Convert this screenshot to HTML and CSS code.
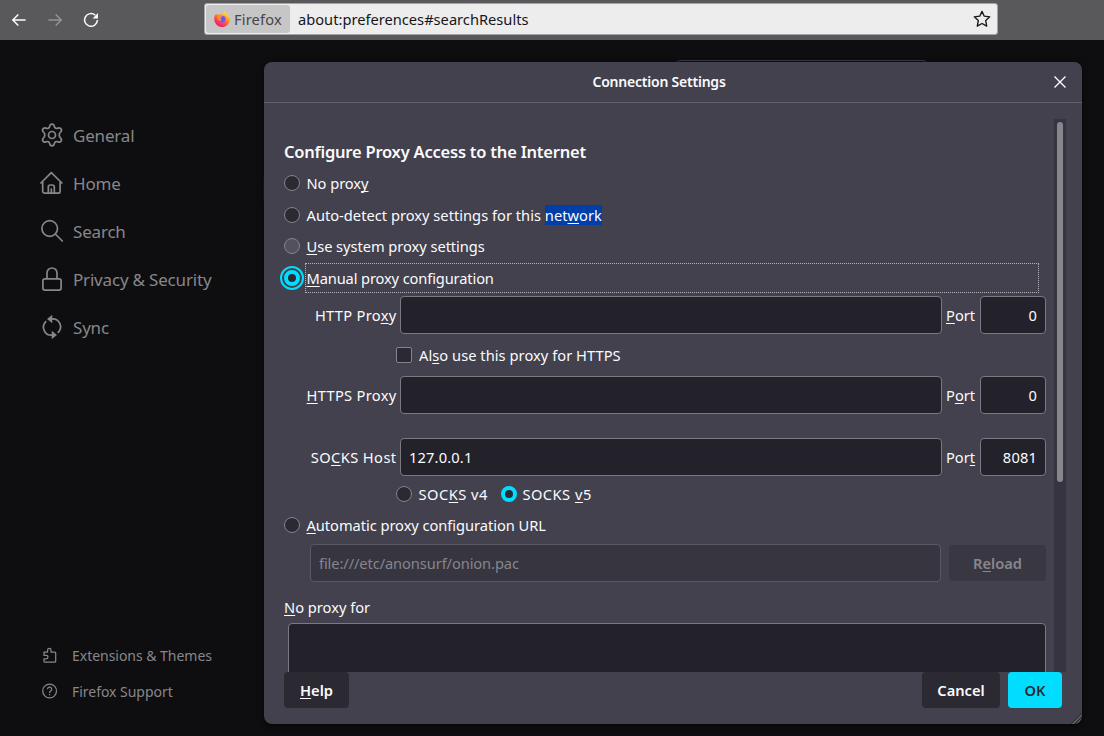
FILE: index.html
```html
<!DOCTYPE html>
<html lang="en">
<head>
<meta charset="utf-8">
<title>Settings</title>
<link rel="stylesheet" href="styles.css">
</head>
<body>
<header class="toolbar">
  <nav class="nav-buttons">
    <svg class="nav-icon" viewBox="0 0 16 16"><path d="M14.6 8H2M7.3 2.5 1.8 8l5.500 5.500"/></svg>
    <svg class="nav-icon nav-disabled" viewBox="0 0 16 16"><path d="M1.400 8H14M8.700 2.500 14.200 8l-5.500 5.500"/></svg>
    <svg class="nav-icon" viewBox="0 0 16 16"><path d="M12.300 3.200A6.400 6.400 0 1 0 14.400 8"/><path class="solid" d="M15 1v5.500H9.500z"/></svg>
  </nav>
  <div class="urlbar">
    <div class="identity">
      <svg class="firefox-logo" viewBox="0 0 16 16">
        <defs>
          <linearGradient id="flame" x1=".85" y1=".05" x2=".25" y2=".95"><stop offset="0" stop-color="#fff44f"/><stop offset=".35" stop-color="#ffa52a"/><stop offset=".65" stop-color="#ff4f3f"/><stop offset="1" stop-color="#f5156c"/></linearGradient>
          <radialGradient id="globe"><stop offset="0" stop-color="#5b4de0"/><stop offset="1" stop-color="#9059ff"/></radialGradient>
        </defs>
        <path fill="url(#flame)" d="M10.200 0c1 1.200 1.500 2 2 3 .5-.2.900-.1 1.200.1C15 4.500 16 6.500 16 8.500A7.800 7.500 0 0 1 .2 8.500C.2 6 .8 4 2.200 2.800l.5 1.100c.8-.5 1.600-.7 2.600-.5C6.500 3.500 9.600 3 10.200 0z"/>
        <circle cx="8.300" cy="8.300" r="3.500" fill="url(#globe)"/>
        <path fill="#ff8f20" d="M3.500 4.500c1-.5 2-.3 2.900.5l2 .4c-.2.900-1.300 1.200-2 1.500-.2 1 .5 1.600 1.700 1.300-.5 1.300-2 1.900-3.200 1.400C3 8.500 2.700 6 3.500 4.500z"/>
      </svg>
      <span class="identity-name">Firefox</span>
    </div>
    <span class="url">about:preferences#searchResults</span>
    <svg class="star" viewBox="0 0 16 16"><path d="m8 1.200 2 4.300 4.900.6-3.600 3.300.9 4.900L8 12l-4.200 2.300.9-4.900L1.100 6.100 6 5.500z"/></svg>
  </div>
</header>

<div class="page">
  <aside class="sidebar">
    <ul class="categories">
      <li><svg viewBox="0 0 24 24"><circle cx="12" cy="12" r="3.500"/><path d="M9.700 3.400Q10 1.200 12 1.200t2.300 2.200q.2 1.500 1.700 2 .6.300 2.100-.3 2-.7 3 .9 1 1.800-.6 3.100-1.300.9-1.300 2.900t1.300 2.900q1.600 1.300.6 3.100-1 1.600-3 .9-1.500-.6-2.100-.3-1.500.5-1.700 2-.3 2.200-2.300 2.200t-2.300-2.200q-.2-1.500-1.700-2-.6-.3-2.100.3-2 .7-3-.9-1-1.800.6-3.100 1.300-.9 1.300-2.900T3.500 9.100Q1.900 7.800 2.900 6q1-1.600 3-.9 1.500.6 2.100.3 1.500-.5 1.700-2z"/></svg>General</li>
      <li><svg viewBox="0 0 24 24"><path d="M.9 12 11.300 1.700 21.900 12M2.700 10.500v9.700a2 2 0 0 0 2 2h13.400a2 2 0 0 0 2-2v-9.700M8.300 22v-6a2 2 0 0 1 2-2h2a2 2 0 0 1 2 2v6M11.300 22v-4"/></svg>Home</li>
      <li><svg viewBox="0 0 24 24"><circle cx="9.700" cy="9.500" r="7.800"/><path d="m15.300 15 7 7"/></svg>Search</li>
      <li><svg viewBox="0 0 24 24"><rect x="2.900" y="11.800" width="18.200" height="11.300" rx="2"/><path d="M7 11.500V6a5 5 0 0 1 10 0v5.500"/></svg>Privacy &amp; Security</li>
      <li><svg viewBox="0 0 24 24"><path d="M11.500 3.800H12a8 8 0 0 1 6.200 13.600M12.500 20.200H12A8 8 0 0 1 5.800 6.600"/><path class="solid" d="M12.300-.2v8.400L7 4zM11.700 15.800v8.400l5.300-4.200z"/></svg>Sync</li>
    </ul>
    <ul class="links">
      <li><svg viewBox="0 0 16 16"><path d="M2 5h3.600V3a1.700 1.700 0 0 1 3.400 0v2h3.700a1 1 0 0 1 1 1v8.200a1 1 0 0 1-1 1H3a1 1 0 0 1-1-1v-2.400h2.300a1.700 1.700 0 0 0 0-3.400H2z"/></svg>Extensions &amp; Themes</li>
      <li><svg viewBox="0 0 16 16"><circle cx="7.600" cy="8" r="6.900"/><path d="M5.500 6.300A2.100 2.100 0 1 1 8.700 8c-.7.500-1.100.8-1.100 1.600v.3M7.600 11v1.200"/></svg>Firefox Support</li>
    </ul>
  </aside>
  <div class="search-field"></div>
  <div class="result-edge"></div>

  <section class="dialog">
    <header class="dialog-title">
      <h1>Connection Settings</h1>
      <svg class="close" viewBox="0 0 12 12"><path d="m.5.5 11 11M11.500.5l-11 11"/></svg>
    </header>
    <div class="dialog-body">
      <div class="content">
        <h2>Configure Proxy Access to the Internet</h2>
        <label class="choice"><i class="radio"></i><span>No prox<u>y</u></span></label>
        <label class="choice"><i class="radio"></i><span class="wide">Auto-detect proxy settings for this <mark>net<u>w</u>ork</mark></span></label>
        <label class="choice system"><i class="radio hover"></i><span><u>U</u>se system proxy settings</span></label>
        <label class="choice manual"><i class="radio checked focus"></i><span class="focus-box"><u>M</u>anual proxy configuration</span></label>

        <div class="host-row"><span class="field-label">HTTP Pro<u>x</u>y</span><div class="field"></div><span class="port-label"><u>P</u>ort</span><div class="field port">0</div></div>
        <label class="also"><i class="checkbox"></i><span>Al<u>s</u>o use this proxy for HTTPS</span></label>
        <div class="host-row"><span class="field-label"><u>H</u>TTPS Proxy</span><div class="field"></div><span class="port-label">P<u>o</u>rt</span><div class="field port">0</div></div>
        <div class="host-row socks"><span class="field-label">SO<u>C</u>KS Host</span><div class="field">127.0.0.1</div><span class="port-label">Por<u>t</u></span><div class="field port">8081</div></div>
        <div class="versions">
          <label><i class="radio"></i><span>SOC<u>K</u>S v4</span></label>
          <label><i class="radio checked"></i><span>SOCKS <u>v</u>5</span></label>
        </div>
        <label class="choice auto"><i class="radio"></i><span><u>A</u>utomatic proxy configuration URL</span></label>
        <div class="pac-row"><div class="field disabled">file:///etc/anonsurf/onion.pac</div><button class="btn reload" disabled>R<u>e</u>load</button></div>
        <div class="exceptions-label"><u>N</u>o proxy for</div>
        <div class="exceptions"></div>
      </div>
      <div class="scrollbar"><div class="thumb"></div></div>
    </div>
    <footer class="actions">
      <button class="btn help"><u>H</u>elp</button>
      <button class="btn cancel">Cancel</button>
      <button class="btn primary">OK</button>
    </footer>
    <svg class="grip" viewBox="0 0 11 11"><path class="dark" d="M0 11 11 0M4 11l7-7M8 11l3-3"/><path d="M1.500 11 11 1.500M5.500 11 11 5.500M9 11l2-2"/></svg>
  </section>
</div>
</body>
</html>
```

FILE: styles.css
```css
* { box-sizing: border-box; }
body {
  margin: 0;
  height: 736px;
  overflow: hidden;
  background: #0e0e10;
  color: #fbfbfe;
  font: 14.67px/20px "Noto Sans", sans-serif;
}
svg { fill: none; stroke: currentColor; flex: none; }
.solid { fill: currentColor; stroke: none; }
u { text-decoration: underline 1px; text-underline-offset: 2px; text-decoration-skip-ink: none; }
ul { list-style: none; margin: 0; padding: 0; }

.toolbar {
  display: flex;
  align-items: center;
  height: 40px;
  background: #59595b;
}
.nav-buttons { display: flex; gap: 20px; width: 204px; padding-left: 11px; }
.nav-icon { width: 16px; height: 16px; stroke-width: 1.500; color: #fbfbfe; }
.nav-disabled { color: #949495; }
.urlbar {
  display: flex;
  align-items: center;
  width: 794px;
  height: 32px;
  margin-top: -2px;
  padding: 1px;
  border: 1px solid #a4a4a4;
  border-radius: 3px;
  background: #ededed;
  color: #16161a;
}
.identity {
  display: flex;
  align-items: center;
  gap: 4px;
  width: 84px;
  height: 28px;
  padding-left: 8px;
  border-radius: 3px;
  background: #c6c6c6;
  color: #45454a;
}
.identity-name { letter-spacing: .15px; }
.firefox-logo { width: 16px; height: 16px; stroke: none; }
.url { flex: 1; padding-left: 8px; }
.star { width: 18px; height: 18px; margin-right: 5px; stroke-width: 1.200; stroke-linejoin: round; }

.page { position: relative; display: flex; height: 696px; }
.sidebar {
  display: flex;
  flex-direction: column;
  justify-content: space-between;
  width: 264px;
  padding: 72px 0 26px 40px;
  color: #87878a;
}
.categories li {
  display: flex;
  align-items: center;
  gap: 9px;
  height: 48px;
  font-size: 17px;
  letter-spacing: -.19px;
}
.categories svg {
  width: 24px;
  height: 24px;
  margin-top: -2px;
  stroke-width: 1.700;
  stroke-linejoin: round;
  stroke-linecap: round;
}
.links li {
  display: flex;
  align-items: center;
  gap: 14px;
  height: 36px;
  padding-left: 2px;
  font-size: 14px;
  letter-spacing: -.03px;
}
.links svg { width: 16px; height: 16px; margin-top: -2px; stroke-width: 1.250; stroke-linejoin: round; }
.search-field {
  position: absolute;
  left: 676px;
  top: 20px;
  width: 251px;
  height: 32px;
  border: 1px solid #3d3d41;
  border-radius: 4px;
}
.result-edge { position: absolute; left: 263px; top: 137px; width: 2px; height: 24px; background: #071a43; }

.dialog {
  position: relative;
  display: flex;
  flex-direction: column;
  width: 818px;
  height: 662px;
  margin-top: 22px;
  border-radius: 8px;
  background: #42414d;
  box-shadow: 0 2px 6px rgba(0, 0, 0, .6);
  overflow: hidden;
}
.dialog-title {
  display: grid;
  grid-template-columns: 1fr auto 1fr;
  align-items: center;
  height: 41px;
  border-bottom: 1px solid #62616b;
}
.dialog-title h1 {
  grid-column: 2;
  margin: 0 28px 0 0;
  font-size: 14px;
  font-weight: 600;
  letter-spacing: -.22px;
}
.close { justify-self: end; width: 12px; height: 12px; margin-right: 16px; stroke-width: 1.400; }
.dialog-body {
  display: flex;
  height: 553px;
  margin: 16px 16px 0 0;
  padding-left: 20px;
  overflow: hidden;
}
.content { width: 762px; margin-right: 8px; padding-top: 21px; flex: none; }
.content h2 {
  height: 24px;
  margin: 0 0 3px;
  font-size: 16.500px;
  line-height: 24px;
  font-weight: 600;
  letter-spacing: -.22px;
}
.scrollbar { width: 12px; height: 553px; padding: 3px; background: #35343f; }
.thumb { width: 6px; height: 360px; border-radius: 3px; background: #87868d; }

.radio {
  flex: none;
  width: 16px;
  height: 16px;
  border: 1px solid #85848c;
  border-radius: 50%;
  background: #2b2a33;
}
.radio.hover { background: #52525e; }
.radio.checked { border: 4px solid #00ddff; }
.radio.focus { outline: 2px solid #00ddff; outline-offset: 2px; }
.choice { display: flex; align-items: center; gap: 6.500px; height: 32px; letter-spacing: -.05px; }
.choice .wide { letter-spacing: .01px; }
.choice.system { height: 30px; }
.choice.manual { gap: 5px; margin-top: 1px; letter-spacing: -.13px; }
.choice .focus-box {
  width: 734px;
  height: 30px;
  padding-left: .5px;
  border: 1px dotted #b5b4ba;
  line-height: 29px;
}
mark { display: inline-block; background: #003eaa; color: inherit; }
.host-row { display: flex; align-items: center; height: 38px; margin-top: 2px; }
.field-label { width: 112.500px; margin-right: 3.500px; text-align: right; white-space: nowrap; letter-spacing: .3px; }
.socks .field-label { letter-spacing: .4px; }
.field {
  flex: 1;
  height: 38px;
  padding: 0 8px;
  border: 1px solid #7b7a83;
  border-radius: 4px;
  background: #23222b;
  line-height: 36px;
}
.socks .field { letter-spacing: .15px; }
.port-label { width: 38px; padding-left: 4px; }
.field.port { flex: none; width: 66px; text-align: right; }
.also { display: flex; align-items: center; gap: 7px; height: 42px; padding-left: 112px; letter-spacing: .04px; }
.checkbox { width: 16px; height: 16px; border: 1px solid #85848c; border-radius: 2px; background: #2b2a33; }
.also + .host-row { margin-top: 0; }
.host-row.socks { margin-top: 24px; }
.versions { display: flex; gap: 13px; height: 36px; padding-left: 112px; letter-spacing: .48px; }
.versions label { display: flex; align-items: center; gap: 6.500px; }
.versions label + label { gap: 5.500px; }
.choice.auto { height: 26px; }
.pac-row { display: flex; align-items: center; gap: 8px; margin: 6px 0 0 26px; }
.field.disabled { border-color: #5a5963; background: #363540; color: #86858d; letter-spacing: -.1px; }
.btn {
  height: 36px;
  padding: 0;
  border: 0;
  border-radius: 4px;
  background: #2b2a33;
  color: #fbfbfe;
  font: 600 14.670px/36px "Noto Sans", sans-serif;
}
.reload { width: 97px; background: #393842; color: #87868e; }
.exceptions-label { height: 41px; line-height: 51px; }
.exceptions { height: 120px; margin-left: 4px; border: 1px solid #7b7a83; border-radius: 4px; background: #23222b; }
.actions { display: flex; gap: 8px; padding: 0 20px; }
.help { width: 65px; margin-right: auto; }
.cancel { width: 78px; }
.primary { width: 54px; background: #00ddff; color: #2b2a33; }
.grip { position: absolute; right: 0; bottom: 0; width: 11px; height: 11px; stroke: #85848c; stroke-width: .8; }
.grip .dark { stroke: #25242c; }
```
